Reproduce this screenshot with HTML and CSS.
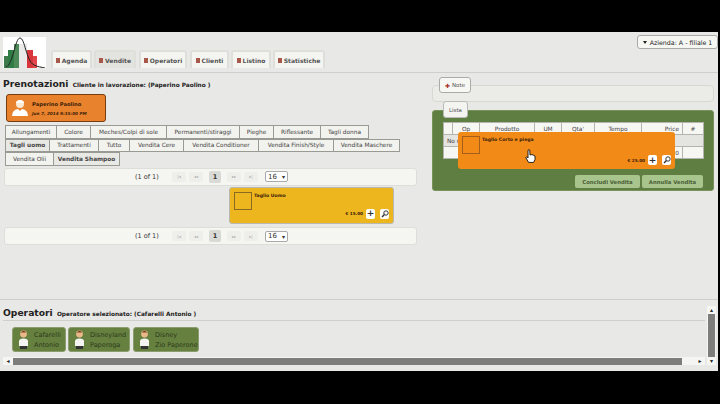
FILE: index.html
```html
<!DOCTYPE html>
<html lang="it">

<head>
    <meta charset="UTF-8">
    <title>Vendite</title>
    <link rel="stylesheet" href="styles.css">
</head>

<body>
    <div class="screen">
        <!-- testata -->
        <header class="top">
            <svg class="logo" width="43" height="31" viewBox="0 0 43 31">
                <rect width="43" height="31" fill="#fff" />
                <rect x="1" y="19" width="4" height="12" fill="#3f7a4c" />
                <rect x="5" y="13" width="6" height="18" fill="#2f7d45" />
                <rect x="11" y="7" width="5" height="24" fill="#4d8a58" />
                <rect x="16" y="7" width="8" height="24" fill="#e9e9e7" />
                <rect x="24" y="13" width="6" height="18" fill="#d9363c" />
                <rect x="30" y="19" width="4" height="12" fill="#e0474c" />
                <path d="M3 30C10 28 12 1 17 1C22 1 23 24 31 28C35 30 38 30 42 31" fill="none" stroke="#222" stroke-width="1" />
            </svg>
            <nav class="tabs">
                <a class="tab tab-agenda"><i class="ico"></i>Agenda</a>
                <a class="tab tab-vendite active"><i class="ico"></i>Vendite</a>
                <a class="tab tab-operatori"><i class="ico"></i>Operatori</a>
                <a class="tab tab-clienti"><i class="ico"></i>Clienti</a>
                <a class="tab tab-listino"><i class="ico"></i>Listino</a>
                <a class="tab tab-statistiche"><i class="ico"></i>Statistiche</a>
            </nav>
            <div class="azienda"><span class="caret"></span>Azienda: A - filiale 1</div>
        </header>

        <main class="main">
            <section class="left">
                <h1 class="title">Prenotazioni <small>Cliente in lavorazione: (Paperino Paolino )</small></h1>
                <div class="client">
                    <svg width="16" height="18" viewBox="0 0 16 18">
                        <circle cx="8" cy="5" r="4" fill="#fbe9d2" />
                        <path d="M4 3Q8 -1 12 3L12 4L4 4Z" fill="#fff" />
                        <path d="M0 17Q0 11 6 10L8 12L10 10Q16 11 16 17Z" fill="#fff" />
                    </svg>
                    <div>
                        <div class="client-name">Paperino Paolino</div>
                        <div class="client-date">Jun 7, 2014 9:15:00 PM</div>
                    </div>
                </div>

                <div class="cats">
                    <div class="cat-row">
                        <a class="w52">Allungamenti</a><a class="w34">Colore</a><a class="w76">Meches/Colpi di sole</a><a class="w73">Permanenti/stiraggi</a><a class="w34">Pieghe</a><a class="w47">Riflessante</a><a class="w48">Tagli donna</a>
                    </div>
                    <div class="cat-row">
                        <a class="w45 current">Tagli uomo</a><a class="w49">Trattamenti</a><a class="w31">Tutto</a><a class="w54">Vendita Cere</a><a class="w75">Vendita Conditioner</a><a class="w75">Vendita Finish/Style</a><a class="w66">Vendita Maschere</a>
                    </div>
                    <div class="cat-row">
                        <a class="w49">Vendita Olii</a><a class="w66 current">Vendita Shampoo</a>
                    </div>
                </div>

                <div class="pager">
                    <span class="count">(1 of 1)</span>
                    <span class="pg">|◂</span><span class="pg">◂◂</span><span class="pg num">1</span><span class="pg">▸▸</span><span class="pg">▸|</span>
                    <span class="perpage">16 <b>▾</b></span>
                </div>
                <div class="grid-area">
                    <div class="product yellow">
                        <span class="thumb"></span>
                        <span class="prod-name">Taglio Uomo</span>
                        <div class="prod-foot"><span class="prod-price">€ 15.00</span><span class="mini">+</span><span class="mini"><svg width="8" height="8" viewBox="0 0 8 8"><circle cx="5" cy="3" r="2.2" fill="none" stroke="#333" /><path d="M3.4 4.6L1 7" stroke="#333" stroke-width="1.4" /></svg></span></div>
                    </div>
                </div>
                <div class="pager">
                    <span class="count">(1 of 1)</span>
                    <span class="pg">|◂</span><span class="pg">◂◂</span><span class="pg num">1</span><span class="pg">▸▸</span><span class="pg">▸|</span>
                    <span class="perpage">16 <b>▾</b></span>
                </div>
            </section>

            <section class="right">
                <a class="btn-note"><b>✚</b> Note</a>
                <div class="note-band"></div>
                <a class="lista-tab">Lista</a>
                <div class="green">
                    <table class="cart">
                        <tr>
                            <th class="c0"></th>
                            <th class="c1">Op</th>
                            <th class="c2">Prodotto</th>
                            <th class="c3">UM</th>
                            <th class="c4">Qta'</th>
                            <th class="c5">Tempo</th>
                            <th class="c6 price">Price</th>
                            <th class="c7">#</th>
                        </tr>
                        <tr class="empty">
                            <td colspan="8">No r</td>
                        </tr>
                        <tr class="foot">
                            <td colspan="6"></td>
                            <td class="price">0</td>
                            <td></td>
                        </tr>
                    </table>
                    <div class="actions">
                        <a class="btn-green">Concludi Vendita</a>
                        <a class="btn-green">Annulla Vendita</a>
                    </div>

                    <!-- prodotto trascinato sopra il carrello -->
                    <div class="product dragged">
                        <span class="thumb"></span>
                        <span class="prod-name">Taglio Corto e piega</span>
                        <div class="prod-foot"><span class="prod-price">€ 25.00</span><span class="mini">+</span><span class="mini"><svg width="8" height="8" viewBox="0 0 8 8"><circle cx="5" cy="3" r="2.2" fill="none" stroke="#333" /><path d="M3.4 4.6L1 7" stroke="#333" stroke-width="1.4" /></svg></span></div>
                        <svg class="hand" width="11" height="14" viewBox="0 0 11 14">
                            <path d="M3 1.2Q4 .2 4.8 1.2L5 6L6.8 5.6L8.5 6.2L10 7L10 10.5L8.6 13.4L3.6 13.4L.8 8.6Q1 7.4 2.6 8.4L3 9Z" fill="#fff" stroke="#111" stroke-width=".9" />
                        </svg>
                    </div>
                </div>
            </section>
        </main>

        <section class="ops">
            <div class="ops-body">
                <h2 class="title ops-title">Operatori <small>Operatore selezionato: (Cafarelli Antonio )</small></h2>
                <div class="ops-list">
                    <div class="op w54">
                        <svg width="11" height="19" viewBox="0 0 11 19"><circle cx="5.5" cy="4" r="3.4" fill="#e9b98c" /><path d="M2 3.5Q5.500 -2 9 3.500L8 2.500L3 2.500Z" fill="#7a3d16" /><path d="M1 16V11Q1 8.500 5.500 8.500Q10 8.500 10 11V16Z" fill="#f4f4f0" /><rect x="2" y="16" width="7" height="3" fill="#333" /></svg>
                        <div><div>Cafarelli</div><div>Antonio</div></div>
                    </div>
                    <div class="op w62">
                        <svg width="11" height="19" viewBox="0 0 11 19"><circle cx="5.5" cy="4" r="3.4" fill="#e9b98c" /><path d="M2 3.5Q5.500 -2 9 3.500L8 2.500L3 2.500Z" fill="#7a3d16" /><path d="M1 16V11Q1 8.500 5.500 8.500Q10 8.500 10 11V16Z" fill="#f4f4f0" /><rect x="2" y="16" width="7" height="3" fill="#333" /></svg>
                        <div><div>Disneyland</div><div>Paperoga</div></div>
                    </div>
                    <div class="op w66">
                        <svg width="11" height="19" viewBox="0 0 11 19"><circle cx="5.5" cy="4" r="3.4" fill="#e9b98c" /><path d="M2 3.5Q5.500 -2 9 3.500L8 2.500L3 2.500Z" fill="#7a3d16" /><path d="M1 16V11Q1 8.500 5.500 8.500Q10 8.500 10 11V16Z" fill="#f4f4f0" /><rect x="2" y="16" width="7" height="3" fill="#333" /></svg>
                        <div><div>Disney</div><div>Zio Paperone</div></div>
                    </div>
                </div>
                <div class="hbar">
                    <span class="arrow">◂</span>
                    <span class="hthumb"></span>
                    <span class="arrow end">▸</span>
                </div>
            </div>
            <div class="vbar">
                <span class="arrow">▴</span>
                <span class="vthumb"></span>
                <span class="arrow">▾</span>
            </div>
        </section>
    </div>
</body>

</html>
```
FILE: styles.css
```css
* {
    box-sizing: border-box;
}

html,
body {
    margin: 0;
    height: 404px;
    overflow: hidden;
    background: #000;
}

body {
    padding: 32px 2px 33px 0;
    font-family: "DejaVu Sans", sans-serif;
    color: #333;
}

.screen {
    height: 339px;
    display: flex;
    flex-direction: column;
    background: #e8e8e6;
}

/* testata */
.top {
    height: 41px;
    flex: none;
    display: flex;
    align-items: flex-end;
    padding: 5px 0 4px 3px;
    border-bottom: 1px solid #cfcfcb;
}

.logo {
    flex: none;
    align-self: flex-start;
}

.tabs {
    display: flex;
    gap: 2px;
    margin-left: 5px;
}

.tab {
    height: 18px;
    display: flex;
    align-items: center;
    justify-content: center;
    gap: 2px;
    font-size: 6px;
    font-weight: bold;
    color: #555;
    background: #f4f4f1;
    border: 2px solid #dededa;
    border-bottom: 0;
    border-radius: 3px 3px 0 0;
}

.tab.active {
    background: #e3e3df;
}

.ico {
    width: 4px;
    height: 5px;
    background: #a8584a;
}

.tab-agenda {
    width: 41px;
}

.tab-vendite {
    width: 42px;
}

.tab-operatori {
    width: 48px;
    margin-left: 1px;
}

.tab-clienti {
    width: 39px;
    margin-left: 1px;
}

.tab-listino {
    width: 40px;
}

.tab-statistiche {
    width: 52px;
}

.azienda {
    align-self: flex-start;
    margin-left: auto;
    margin-top: -2px;
    height: 14px;
    width: 81px;
    display: flex;
    align-items: center;
    justify-content: center;
    gap: 3px;
    font-size: 6.3px;
    color: #222;
    background: #f6f6f3;
    border: 1px solid #aaa;
    border-radius: 3px;
}

.caret {
    border: 2.5px solid transparent;
    border-top: 3px solid #222;
    border-bottom: 0;
}

/* corpo */
.main {
    flex: 1;
    display: flex;
    padding-left: 3px;
}

.left {
    width: 414px;
    flex: none;
    padding-top: 3px;
}

.title {
    margin: 0;
    height: 15px;
    font-size: 9.200px;
    line-height: 15px;
    font-weight: bold;
    color: #222;
}

.title small {
    font-size: 5.800px;
    font-weight: bold;
    margin-left: 1px;
}

.client {
    width: 100px;
    height: 28px;
    margin: 3px 0 3px 3px;
    display: flex;
    align-items: center;
    gap: 4px;
    padding-left: 5px;
    background: #e8822c;
    border: 1px solid #7a3a10;
    border-radius: 3px;
    color: #40210a;
}

.client-name {
    font-size: 5.200px;
    font-weight: bold;
}

.client-date {
    font-size: 4.200px;
    font-style: italic;
    font-weight: bold;
    margin-top: 4px;
}

.cats {
    padding-left: 2px;
}

.cat-row {
    display: flex;
    height: 13.500px;
}

.cat-row a {
    display: flex;
    align-items: center;
    justify-content: center;
    font-size: 5.800px;
    color: #444;
    background: #f2f2ee;
    border: 1px solid #9a9a94;
    border-left-width: 0;
    white-space: nowrap;
}

.cat-row a:first-child {
    border-left-width: 1px;
}

.cat-row a.current {
    font-weight: bold;
    background: #e8e8e4;
}

.w31 { width: 31px; }
.w34 { width: 34px; }
.w45 { width: 45px; }
.w47 { width: 47px; }
.w48 { width: 48px; }
.w49 { width: 49px; }
.w52 { width: 52px; }
.w54 { width: 54px; }
.w62 { width: 62px; }
.w66 { width: 66px; }
.w73 { width: 73px; }
.w75 { width: 75px; }
.w76 { width: 76px; }

.pager {
    height: 18px;
    margin-top: 2px;
    margin-left: 1px;
    display: flex;
    align-items: center;
    padding-left: 130px;
    gap: 3px;
    background: #f5f5f2;
    border: 1px solid #deded9;
    border-radius: 3px;
}

.count {
    font-size: 6.500px;
    width: 30px;
    margin-right: 4px;
    color: #333;
}

.pg {
    width: 14px;
    height: 10px;
    display: flex;
    align-items: center;
    justify-content: center;
    font-size: 4px;
    color: #aaa;
    background: #eeeeeb;
    border-radius: 2px;
}

.pg.num {
    width: 12px;
    height: 12px;
    font-size: 6.500px;
    font-weight: bold;
    color: #333;
    background: #d9d9d5;
    margin: 0 3px;
}

.perpage {
    width: 23px;
    height: 11px;
    margin-left: 4px;
    display: flex;
    align-items: center;
    justify-content: space-between;
    padding: 0 2px;
    font-size: 7px;
    background: #fff;
    border: 1px solid #aaa;
    border-radius: 2px;
}

.perpage b {
    font-size: 6px;
}

.grid-area {
    height: 39.500px;
    padding: 1px 23px 0 0;
    display: flex;
    justify-content: flex-end;
}

.product {
    position: relative;
    width: 165px;
    height: 37px;
    padding: 4px;
    display: flex;
    gap: 2px;
    border-radius: 3px;
    color: #40210a;
}

.yellow {
    background: #edb61e;
    border: 1px solid #b8b8ae;
}

.thumb {
    width: 18px;
    height: 18px;
    flex: none;
    border: 1px solid #8a6a20;
}

.prod-name {
    font-size: 4.600px;
    font-weight: bold;
    margin-top: 1px;
}

.prod-foot {
    position: absolute;
    right: 4px;
    bottom: 4px;
    display: flex;
    align-items: center;
    gap: 5px;
}

.prod-price {
    font-size: 4.200px;
    font-weight: bold;
    margin-right: -2px;
}

.mini {
    width: 9px;
    height: 10px;
    display: flex;
    align-items: center;
    justify-content: center;
    font-size: 9px;
    line-height: 9px;
    font-weight: bold;
    background: #fff;
    border-radius: 2px;
    color: #333;
}

/* carrello */
.right {
    width: 282px;
    margin-left: 15px;
    padding-top: 4px;
    position: relative;
}

.btn-note {
    display: flex;
    align-items: center;
    justify-content: center;
    gap: 2px;
    width: 32px;
    height: 16px;
    margin-left: 7px;
    position: relative;
    font-size: 5.500px;
    background: #f7f7f4;
    border: 1px solid #aaa;
    border-radius: 3px;
    color: #555;
}

.btn-note b {
    color: #a83228;
    font-size: 6px;
}

.note-band {
    height: 17px;
    margin-top: -8px;
    background: #ebebe8;
    border: 1px solid #d8d8d3;
    border-radius: 4px;
}

.lista-tab {
    display: flex;
    align-items: center;
    justify-content: center;
    width: 25px;
    height: 17px;
    margin: -1px 0 -8px 11px;
    position: relative;
    z-index: 1;
    font-size: 5.500px;
    color: #555;
    background: #f4f4f1;
    border: 1px solid #bbb;
    border-radius: 3px;
}

.green {
    position: relative;
    height: 81px;
    padding: 11px 10px 0;
    background: #5f7e42;
    border: 1px solid #77935b;
    border-radius: 3px;
}

.cart {
    width: 260px;
    table-layout: fixed;
    border-collapse: collapse;
    background: #f6f6f3;
    font-size: 5.800px;
    color: #444;
}

.cart th,
.cart td {
    height: 12px;
    padding: 0 3px;
    font-weight: normal;
    text-align: center;
    border: 1px solid #b4b4ae;
    white-space: nowrap;
    overflow: hidden;
}

.cart .price {
    text-align: right;
}

.cart .empty td {
    text-align: left;
    background: #e4e4e0;
}

.c0 { width: 9px; }
.c1 { width: 27px; }
.c2 { width: 55px; }
.c3 { width: 27px; }
.c4 { width: 33px; }
.c5 { width: 47px; }
.c6 { width: 41px; }
.c7 { width: 21px; }

.actions {
    display: flex;
    justify-content: flex-end;
    gap: 2px;
    margin-top: 16px;
}

.btn-green {
    height: 13px;
    display: flex;
    align-items: center;
    justify-content: center;
    font-size: 5.300px;
    font-weight: bold;
    color: #4a5e36;
    background: #a9c58e;
    border-radius: 2px;
    white-space: nowrap;
}

.btn-green:first-child {
    width: 65px;
}

.btn-green:last-child {
    width: 61px;
}

.dragged {
    position: absolute;
    left: 25px;
    top: 21px;
    width: 217px;
    background: #f18a17;
}

.dragged .thumb {
    border-color: #a55f1a;
}

.hand {
    position: absolute;
    left: 67px;
    top: 17px;
}

/* operatori */
.ops {
    height: 72px;
    flex: none;
    display: flex;
    border-top: 1px solid #cfcfcb;
    padding: 2px 2px 6px 3px;
}

.ops-body {
    flex: 1;
    min-width: 0;
    margin-right: 2px;
}

.ops-title {
    height: 16px;
    margin-top: 3px;
    border-bottom: 1px solid #cfcfcb;
}

.ops-list {
    display: flex;
    gap: 2px;
    padding: 6px 0 0 9px;
}

.op {
    height: 25px;
    display: flex;
    align-items: center;
    gap: 5px;
    padding-left: 5px;
    font-size: 6.500px;
    line-height: 10px;
    color: #2c3a1c;
    background: #66803f;
    border: 1px solid #8b9d6f;
    border-radius: 3px;
    white-space: nowrap;
}

.op + .op + .op {
    margin-left: 1px;
}

.hbar {
    height: 8px;
    margin-top: 5px;
    display: flex;
    align-items: center;
    background: #f5f5f3;
}

.hbar .arrow {
    width: 10px;
    text-align: center;
    font-size: 6px;
    line-height: 8px;
    color: #222;
}

.hbar .end {
    margin-left: auto;
}

.hthumb {
    width: 669px;
    height: 7px;
    background: #7d7d7b;
}

.vbar {
    width: 9px;
    flex: none;
    display: flex;
    flex-direction: column;
    align-items: center;
    background: #f5f5f3;
    margin-top: 4px;
}

.vbar .arrow {
    height: 8px;
    font-size: 6px;
    line-height: 8px;
    color: #222;
}

.vthumb {
    flex: 1;
    width: 7px;
    background: #7d7d7b;
}
```
